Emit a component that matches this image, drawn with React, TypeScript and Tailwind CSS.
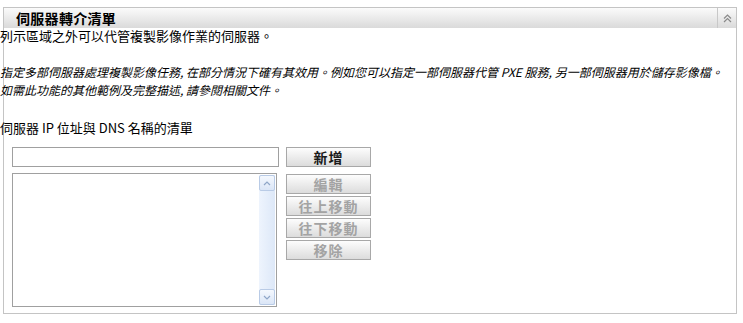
import React from "react";

const font = { fontFamily: '"Noto Sans CJK TC", "Noto Sans", sans-serif' };

function Btn({ label, disabled }: { label: string; disabled?: boolean }) {
  return (
    <div
      className={`h-[20px] w-[85px] border border-[#a8a8a8] bg-gradient-to-b from-[#fdfdfd] to-[#dcdcdc] flex items-center justify-center text-[14px] leading-none font-bold tracking-[1px] ${
        disabled ? "text-[#a3a3a3]" : "text-[#1a1a1a]"
      }`}
    >
      {label}
    </div>
  );
}

export default function App() {
  return (
    <div className="w-[743px] h-[323px] bg-white pt-[7px] pl-[3px] text-black" style={font}>
      <div className="w-[734px] h-[307px] border border-[#c4c4c4] flex flex-col">
        {/* header */}
        <div className="h-[20px] flex bg-gradient-to-b from-[#fbfbfb] to-[#dadada]">
          <div className="flex-1 pl-[12px] text-[14px] font-bold leading-[20px] tracking-[0.3px]">
            伺服器轉介清單
          </div>
          <div className="w-[19px] border-l border-[#c8c8c8] flex items-center justify-center">
            <svg width="9" height="9" viewBox="0 0 9 9" fill="none" stroke="#8a8a8a" strokeWidth="1.2">
              <polyline points="1,4.5 4.5,1 8,4.5" />
              <polyline points="1,8 4.5,4.5 8,8" />
            </svg>
          </div>
        </div>
        {/* body */}
        <div className="flex flex-col -ml-[4px]">
          <div className="h-[16px] leading-[16px] text-[13px] whitespace-nowrap">
            列示區域之外可以代管複製影像作業的伺服器。
          </div>
          <p className="mt-[19px] text-[12px] leading-[18px] italic whitespace-nowrap">
            指定多部伺服器處理複製影像任務, 在部分情況下確有其效用。例如您可以指定一部伺服器代管 PXE 服務, 另一部伺服器用於儲存影像檔。
            <br />
            如需此功能的其他範例及完整描述, 請參閱相關文件。
          </p>
          <div className="mt-[21px] h-[16px] leading-[16px] text-[13px] whitespace-nowrap">
            伺服器 IP 位址與 DNS 名稱的清單
          </div>
          <div className="mt-[11px] ml-[12px] flex gap-[7px]">
            <div className="flex flex-col gap-[6px]">
              <div className="w-[267px] h-[20px] border border-[#a0a0a0] bg-white" />
              <div className="w-[265px] h-[134px] border border-[#a0a0a0] bg-white flex justify-end p-[1px]">
                <div className="w-[16px] h-full bg-gradient-to-r from-[#eef4fd] to-[#dde8f8] flex flex-col justify-between">
                  <div className="h-[16px] border border-[#b9cbe6] rounded-[2px] bg-gradient-to-b from-[#f4f8fe] to-[#dbe6f7] flex items-center justify-center">
                    <svg width="8" height="5" viewBox="0 0 8 5" fill="none" stroke="#8fa6c8" strokeWidth="1.2">
                      <polyline points="1,4 4,1 7,4" />
                    </svg>
                  </div>
                  <div className="h-[16px] border border-[#b9cbe6] rounded-[2px] bg-gradient-to-b from-[#f4f8fe] to-[#dbe6f7] flex items-center justify-center">
                    <svg width="8" height="5" viewBox="0 0 8 5" fill="none" stroke="#8fa6c8" strokeWidth="1.2">
                      <polyline points="1,1 4,4 7,1" />
                    </svg>
                  </div>
                </div>
              </div>
            </div>
            <div className="flex flex-col">
              <Btn label="新增" />
              <div className="mt-[7px] flex flex-col gap-[2px]">
                <Btn label="編輯" disabled />
                <Btn label="往上移動" disabled />
                <Btn label="往下移動" disabled />
                <Btn label="移除" disabled />
              </div>
            </div>
          </div>
        </div>
      </div>
    </div>
  );
}
